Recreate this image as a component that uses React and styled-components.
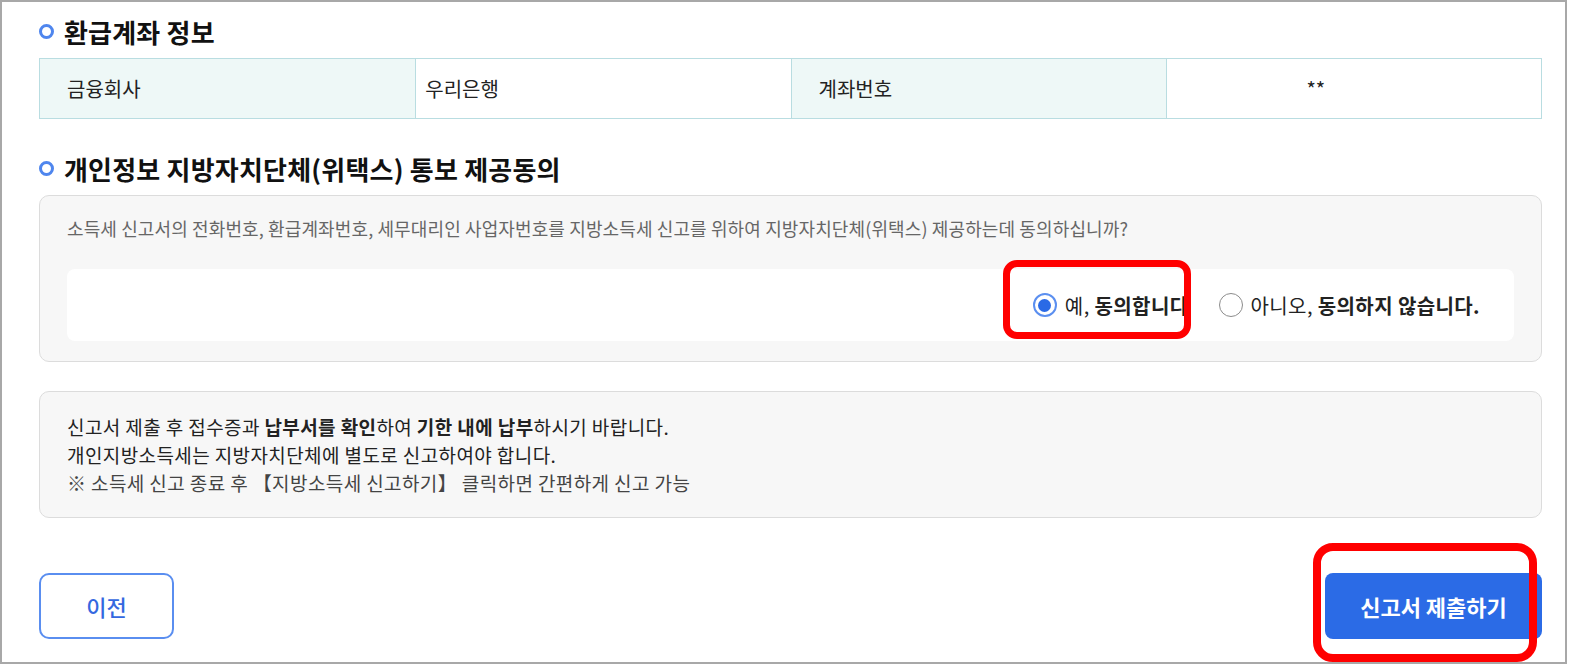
import React from "react";
import styled, { createGlobalStyle } from "styled-components";

const Global = createGlobalStyle`
  html, body { margin: 0; padding: 0; background: #fff; }
  body { font-family: "Noto Sans CJK KR", "Noto Sans", sans-serif; color: #222; }
  *, *::before, *::after { box-sizing: border-box; }
`;

const Frame = styled.div`
  width: 1567px;
  height: 664px;
  border: 2px solid #a8a8a8;
  padding: 13px 23px 0 37px;
  display: flex;
  flex-direction: column;
  overflow: hidden;
`;

const SectionTitle = styled.h2`
  margin: ${(p) => p.$mt || 0}px 0 11px;
  height: 32px;
  display: flex;
  align-items: center;
  gap: 10px;
  font-size: 26px;
  font-weight: 700;
  color: #111;
  letter-spacing: 0.2px;
  &::before {
    content: "";
    width: 15px;
    height: 15px;
    border-radius: 50%;
    border: 3.5px solid #4f86ee;
    flex: none;
  }
`;

const Table = styled.div`
  display: grid;
  grid-template-columns: repeat(4, 1fr);
  border: 1px solid #b9dde1;
  height: 61px;
`;

const Cell = styled.div`
  display: flex;
  align-items: center;
  justify-content: ${(p) => (p.$center ? "center" : "flex-start")};
  padding: ${(p) => (p.$head ? "0 0 0 27px" : p.$center ? "0 76px 0 0" : "0 0 0 9px")};
  background: ${(p) => (p.$head ? "#eef8f7" : "#fff")};
  border-left: ${(p) => (p.$first ? "none" : "1px solid #b9dde1")};
  font-size: 20px;
  color: #222;
`;

const Box = styled.div`
  margin-top: ${(p) => p.$mt || 0}px;
  background: #f7f7f7;
  border: 1px solid #dcdcdc;
  border-radius: 10px;
  padding: ${(p) => p.$pad};
`;

const Question = styled.p`
  margin: 0;
  font-size: 18px;
  line-height: 22px;
  color: #666;
  letter-spacing: 0.12px;
`;

const ChoiceBar = styled.div`
  margin-top: 30px;
  height: 72px;
  background: #fff;
  border-radius: 8px;
  display: flex;
  align-items: center;
  justify-content: flex-end;
  gap: 30px;
  padding-right: 34px;
`;

const Option = styled.label`
  position: relative;
  display: flex;
  align-items: center;
  gap: 8px;
  font-size: 20px;
  color: #222;
  letter-spacing: 0.4px;
  b { font-weight: 700; }
`;

const RadioMark = styled.span`
  width: 24px;
  height: 24px;
  border-radius: 50%;
  border: ${(p) => (p.$on ? "2px solid #5b8ff0" : "1.5px solid #8c8c8c")};
  display: flex;
  align-items: center;
  justify-content: center;
  background: #fff;
  &::after {
    content: "";
    width: 13px;
    height: 13px;
    border-radius: 50%;
    background: ${(p) => (p.$on ? "#2a6ae6" : "transparent")};
  }
`;

const Highlight = styled.span`
  position: absolute;
  left: ${(p) => p.$l}px;
  right: ${(p) => p.$r}px;
  top: ${(p) => p.$t}px;
  bottom: ${(p) => p.$b}px;
  border: ${(p) => p.$w}px solid #ff0000;
  border-radius: ${(p) => p.$rad}px;
  pointer-events: none;
`;

const InfoLine = styled.p`
  margin: 0;
  font-size: 19px;
  line-height: 28px;
  color: ${(p) => (p.$muted ? "#444" : "#222")};
  letter-spacing: 0.4px;
  b { font-weight: 700; }
`;

const ButtonRow = styled.div`
  margin-top: 55px;
  display: flex;
  justify-content: space-between;
  align-items: center;
`;

const PrevButton = styled.button`
  width: 135px;
  height: 66px;
  border: 2px solid #5a8ef0;
  border-radius: 10px;
  background: #fff;
  color: #3468e0;
  font-family: inherit;
  font-size: 22px;
  font-weight: 500;
`;

const SubmitWrap = styled.div`
  position: relative;
`;

const SubmitButton = styled.button`
  width: 217px;
  height: 66px;
  border: none;
  border-radius: 8px;
  background: #2b6be6;
  color: #fff;
  font-family: inherit;
  font-size: 22px;
  font-weight: 700;
  letter-spacing: 0;
`;

export default function App() {
  return (
    <>
      <Global />
      <Frame>
        <SectionTitle>환급계좌 정보</SectionTitle>
        <Table>
          <Cell $head $first>금융회사</Cell>
          <Cell>우리은행</Cell>
          <Cell $head>계좌번호</Cell>
          <Cell $center>**</Cell>
        </Table>

        <SectionTitle $mt={33}>개인정보 지방자치단체(위택스) 통보 제공동의</SectionTitle>
        <Box $pad="21px 27px 20px">
          <Question>
            소득세 신고서의 전화번호, 환급계좌번호, 세무대리인 사업자번호를 지방소득세 신고를 위하여 지방자치단체(위택스) 제공하는데 동의하십니까?
          </Question>
          <ChoiceBar>
            <Option>
              <RadioMark $on />
              <span>
                예, <b>동의합니다</b>
              </span>
              <Highlight $l={-30} $r={-2} $t={-31} $b={-19} $w={7} $rad={14} />
            </Option>
            <Option>
              <RadioMark />
              <span>
                아니오, <b>동의하지 않습니다.</b>
              </span>
            </Option>
          </ChoiceBar>
        </Box>

        <Box $mt={29} $pad="21px 27px 20px">
          <InfoLine>
            신고서 제출 후 접수증과 <b>납부서를 확인</b>하여 <b>기한 내에 납부</b>하시기 바랍니다.
          </InfoLine>
          <InfoLine>개인지방소득세는 지방자치단체에 별도로 신고하여야 합니다.</InfoLine>
          <InfoLine $muted>※ 소득세 신고 종료 후 【지방소득세 신고하기】 클릭하면 간편하게 신고 가능</InfoLine>
        </Box>

        <ButtonRow>
          <PrevButton>이전</PrevButton>
          <SubmitWrap>
            <SubmitButton>신고서 제출하기</SubmitButton>
            <Highlight $l={-12} $r={5} $t={-30} $b={-23} $w={8} $rad={20} />
          </SubmitWrap>
        </ButtonRow>
      </Frame>
    </>
  );
}
